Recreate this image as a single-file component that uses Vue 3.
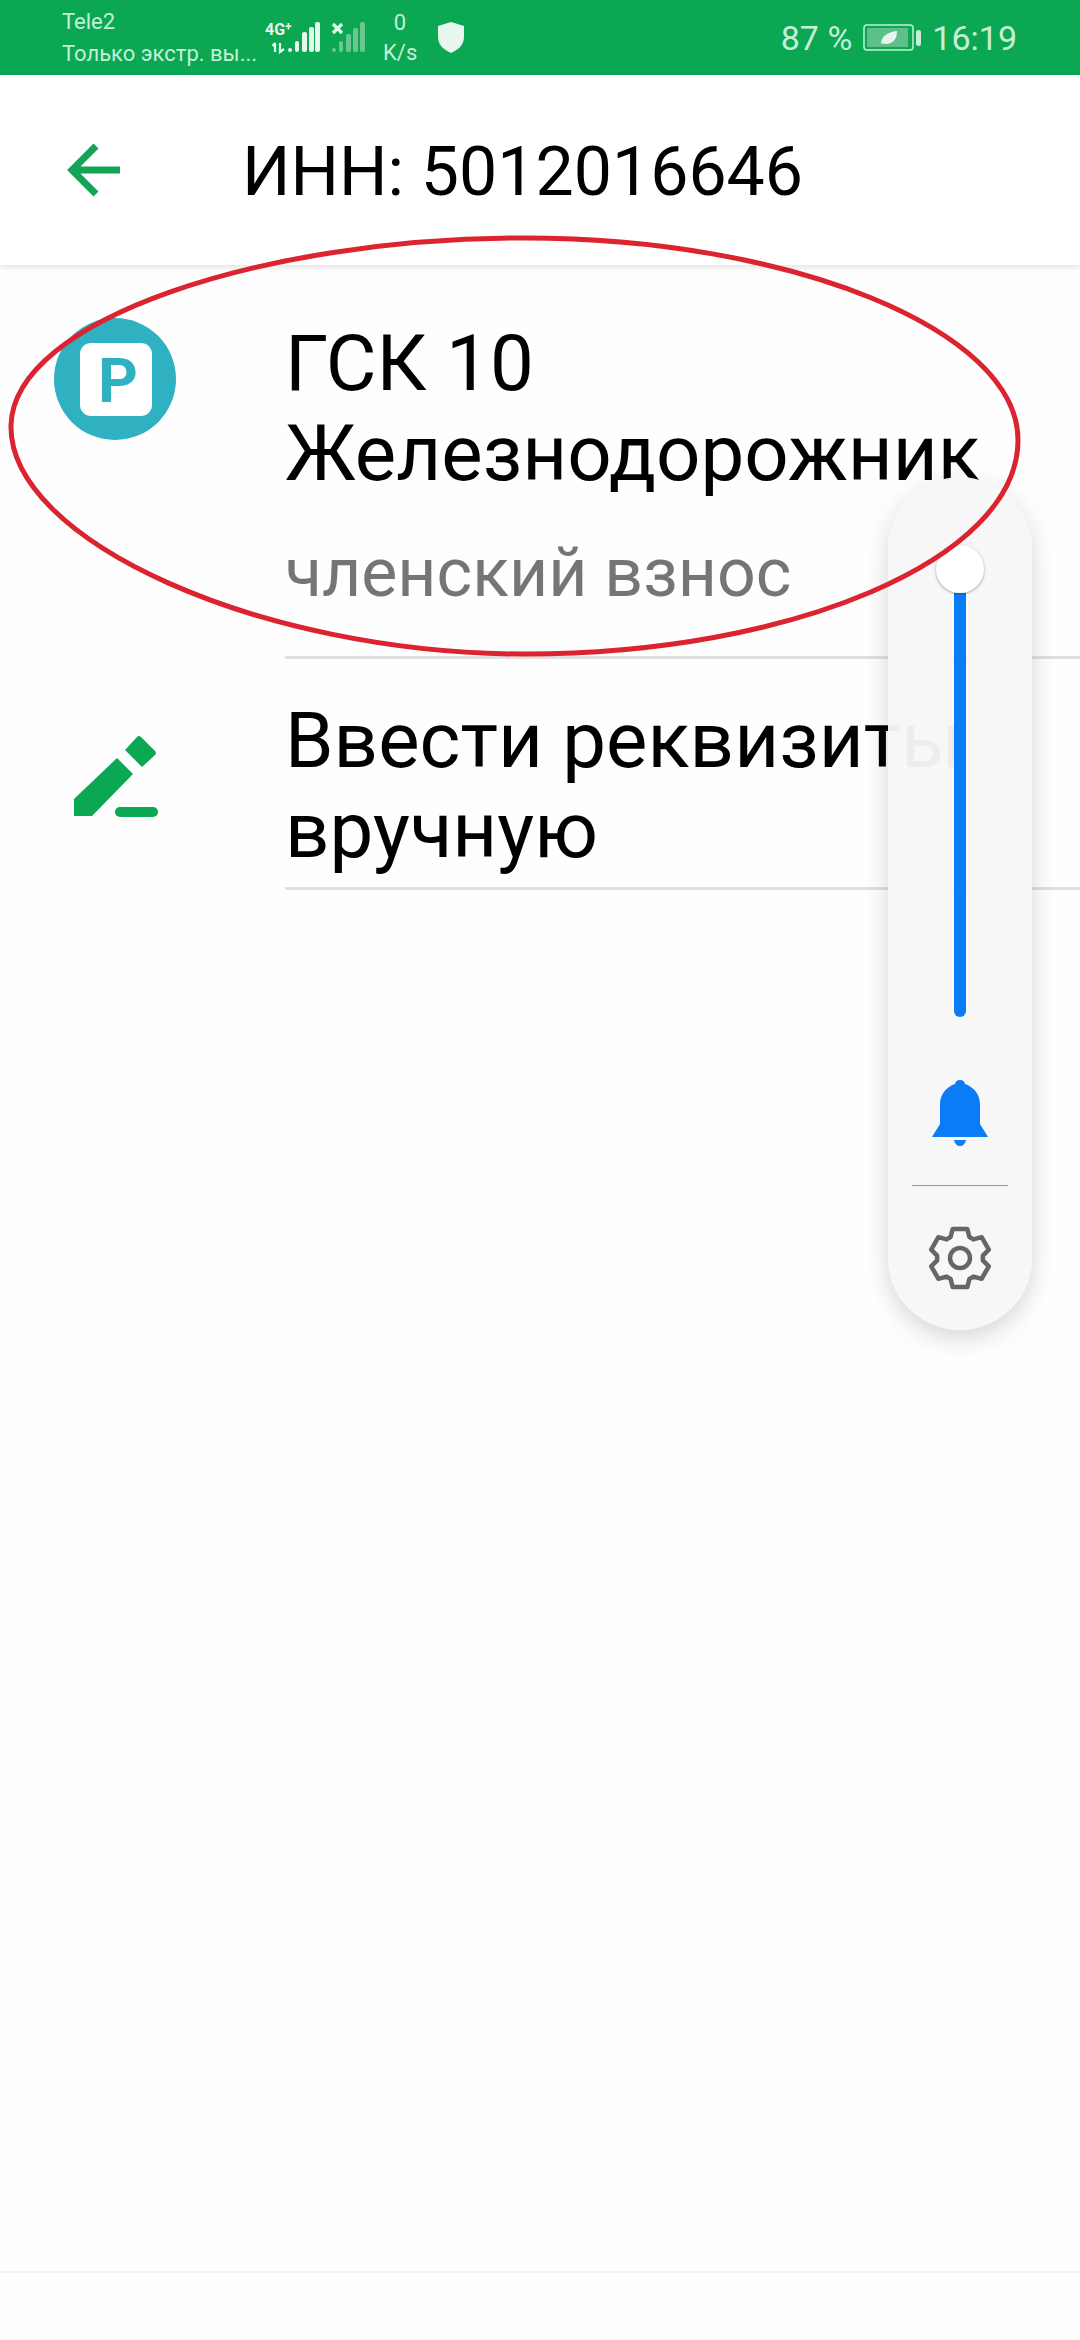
<template>
  <div class="screen">
    <div class="status-bar">
      <div class="carrier">
        <div>Tele2</div>
        <div>Только экстр. вы...</div>
      </div>
      <svg class="signal" width="100" height="36" viewBox="0 0 100 36">
        <text x="0" y="15" class="net">4G<tspan class="net-plus" dy="-4">+</tspan></text>
        <path d="M10 23v9M7.500 26l2.500-3M15 23v9l4-3" stroke="#e8f7ee" stroke-width="2.200" fill="none" />
        <rect x="23" y="28" width="4" height="4" rx="2" fill="#e8f7ee" />
        <rect x="30" y="21" width="4" height="11" rx="2" fill="#e8f7ee" />
        <rect x="37" y="12" width="5" height="20" rx="2" fill="#e8f7ee" />
        <rect x="44" y="7" width="5" height="25" rx="2" fill="#e8f7ee" />
        <rect x="50" y="2" width="5" height="30" rx="2" fill="#e8f7ee" />
        <path d="M68 4l9 9M77 4l-9 9" stroke="#e8f7ee" stroke-width="3.200" />
        <rect x="67" y="28" width="4" height="4" rx="2" fill="#6cc691" />
        <rect x="74" y="21" width="4" height="11" rx="2" fill="#6cc691" />
        <rect x="81" y="14" width="5" height="18" rx="2" fill="#6cc691" />
        <rect x="88" y="8" width="5" height="24" rx="2" fill="#6cc691" />
        <rect x="95" y="2" width="5" height="30" rx="2" fill="#6cc691" />
      </svg>
      <div class="speed">
        <div>0</div>
        <div>K/s</div>
      </div>
      <svg class="shield" width="26" height="31" viewBox="0 0 26 31">
        <path d="M13 0l13 4v11c0 8-6 13-13 16C6 28 0 23 0 15V4z" fill="#e8f7ee" />
      </svg>
      <div class="status-right">
        <span>87 %</span>
        <svg class="battery" width="58" height="28" viewBox="0 0 58 28">
          <rect x="1" y="1" width="49" height="25" rx="3" fill="none" stroke="#c4f0d6" stroke-width="1.500" />
          <rect x="4" y="4" width="41" height="19" fill="#5cc088" />
          <path d="M18 20c0-7 6-12 16-13 0 8-4 13-11 13-2 0-3-1-5 0z" fill="#e8f7ee" />
          <rect x="53" y="6" width="5" height="16" rx="2.500" fill="#c4f0d6" />
        </svg>
        <span>16:19</span>
      </div>
    </div>

    <header class="toolbar">
      <svg class="back" width="56" height="56" viewBox="0 0 56 56">
        <path d="M30 4L6 28l24 24M6 28h48" fill="none" stroke="#14a457" stroke-width="7" />
      </svg>
      <h1>ИНН: 5012016646</h1>
    </header>

    <div class="list">
      <div v-for="row in rows" :key="row.id" class="row" :class="`row-${row.id}`">
        <div class="row-icon">
          <svg v-if="row.id === 'gsk'" width="122" height="122" viewBox="0 0 122 122">
            <circle cx="61" cy="61" r="61" fill="#2fb1c1" />
            <rect x="26" y="25" width="72" height="73" rx="11" fill="#fff" />
            <text x="64" y="84" text-anchor="middle" class="park">P</text>
          </svg>
          <svg v-else width="84" height="83" viewBox="0 0 84 83">
            <path d="M0 65L43 24l16 16-41 42H0z" fill="#0ba753" />
            <path d="M51 16L63 3a3 3 0 0 1 4 0l14 14a3 3 0 0 1 0 4L68 33z" fill="#0ba753" />
            <rect x="41" y="73" width="43" height="10" rx="5" fill="#0ba753" />
          </svg>
        </div>
        <div class="row-body">
          <div class="row-title">{{ row.title }}</div>
          <div v-if="row.note" class="row-note">{{ row.note }}</div>
        </div>
      </div>
    </div>

    <div class="bottom-line"></div>

    <div class="volume-panel">
      <div class="slider">
        <div class="knob"></div>
        <div class="track"></div>
      </div>
      <svg class="bell" width="56" height="66" viewBox="0 0 56 66">
        <path d="M28 0c3 0 4 1 5 4 9 3 15 11 15 20v20l8 13H0l8-13V24C8 15 14 7 23 4c1-3 2-4 5-4z" fill="#0a7cf5" />
        <path d="M22 60h12c-1 4-3 6-6 6s-5-2-6-6z" fill="#0a7cf5" />
      </svg>
      <div class="panel-sep"></div>
      <svg class="gear" width="76" height="76" viewBox="-38 -38 76 76">
        <path :d="gearPath" fill="none" stroke="#666" stroke-width="4.500" stroke-linejoin="round" />
        <circle r="10" fill="none" stroke="#666" stroke-width="4.500" />
      </svg>
    </div>

    <svg class="scribble" width="1080" height="700" viewBox="0 0 1080 700">
      <path d="M11 425C14 320 260 238 525 238C790 238 1018 330 1018 440C1018 560 790 654 525 654C260 654 8 540 11 425Z" fill="none" stroke="#dc2330" stroke-width="5" />
    </svg>
  </div>
</template>

<script setup>
const rows = [
  { id: 'gsk', title: 'ГСК 10 Железнодорожник', note: 'членский взнос' },
  { id: 'manual', title: 'Ввести реквизиты вручную' }
]

// six teeth, each one: root, outer, outer, root
const gearPath = (() => {
  const pts = []
  for (let i = 0; i < 6; i++) {
    const mid = -90 + i * 60
    ;[[-24, 23], [-14, 30], [14, 30], [24, 23]].forEach(([off, r]) => {
      const a = ((mid + off) * Math.PI) / 180
      pts.push(`${(Math.cos(a) * r).toFixed(1)} ${(Math.sin(a) * r).toFixed(1)}`)
    })
  }
  return `M${pts.join('L')}Z`
})()
</script>

<style>
html,
body {
  margin: 0;
  background: #fff;
}
</style>

<style scoped>
.screen {
  position: relative;
  width: 1080px;
  height: 2340px;
  overflow: hidden;
  background: #fefefe;
  font-family: Roboto, "Noto Sans", sans-serif;
}

.status-bar {
  display: flex;
  align-items: center;
  height: 75px;
  padding: 0 63px 0 62px;
  box-sizing: border-box;
  background: #0ba753;
  color: #c4f0d6;
}

.carrier {
  width: 203px;
  font-size: 22px;
  line-height: 32px;
  white-space: nowrap;
}

.net {
  font-size: 16px;
  font-weight: 700;
  fill: #e8f7ee;
}

.net-plus {
  font-size: 12px;
}

.speed {
  width: 34px;
  margin-left: 18px;
  font-size: 22px;
  line-height: 30px;
  text-align: center;
}

.shield {
  margin-left: 21px;
}

.status-right {
  display: flex;
  align-items: center;
  gap: 11px;
  margin-left: auto;
  font-size: 34px;
}

.toolbar {
  position: relative;
  display: flex;
  align-items: center;
  height: 190px;
  padding-left: 66px;
  background: #fff;
  box-shadow: 0 2px 6px rgba(0, 0, 0, 0.12);
}

.toolbar h1 {
  margin: 0 0 0 120px;
  font-size: 68px;
  font-weight: 400;
  color: #000;
  position: relative;
  top: 2px;
}

.park {
  font-size: 62px;
  font-weight: 700;
  fill: #2fb1c1;
}

.row {
  display: flex;
}

.row-icon {
  flex: 0 0 285px;
  box-sizing: border-box;
}

.row-gsk .row-icon {
  padding: 53px 0 0 54px;
}

.row-manual .row-icon {
  padding: 75px 0 0 74px;
}

.row-body {
  flex: 1;
  box-sizing: border-box;
  border-bottom: 3px solid #e0e0e0;
  color: #000;
  font-size: 78px;
  line-height: 90px;
}

.row-gsk .row-body {
  height: 394px;
  padding-top: 54px;
}

.row-manual .row-body {
  height: 231px;
  padding-top: 37px;
}

.row-note {
  margin-top: 39px;
  color: #757575;
  font-size: 68px;
  line-height: 70px;
}

.bottom-line {
  position: absolute;
  left: 0;
  right: 0;
  top: 2271px;
  height: 2px;
  background: #f3f3f3;
}

.volume-panel {
  position: absolute;
  left: 888px;
  top: 477px;
  display: flex;
  flex-direction: column;
  align-items: center;
  width: 144px;
  height: 853px;
  border-radius: 72px;
  background: rgba(247, 247, 247, 0.96);
  box-shadow: 0 8px 24px rgba(0, 0, 0, 0.16);
}

.slider {
  position: relative;
  display: flex;
  justify-content: center;
  width: 100%;
  height: 540px;
}

.knob {
  position: absolute;
  top: 68px;
  width: 48px;
  height: 48px;
  border-radius: 50%;
  background: #fff;
  box-shadow: 0 1px 3px rgba(0, 0, 0, 0.35);
}

.track {
  width: 12px;
  height: 424px;
  margin-top: 116px;
  border-radius: 0 0 6px 6px;
  background: #0a7cf5;
}

.bell {
  margin-top: 63px;
}

.panel-sep {
  width: 96px;
  height: 1px;
  margin-top: 39px;
  background: #999;
}

.gear {
  margin-top: 34px;
}

.scribble {
  position: absolute;
  left: 0;
  top: 0;
  pointer-events: none;
}
</style>
